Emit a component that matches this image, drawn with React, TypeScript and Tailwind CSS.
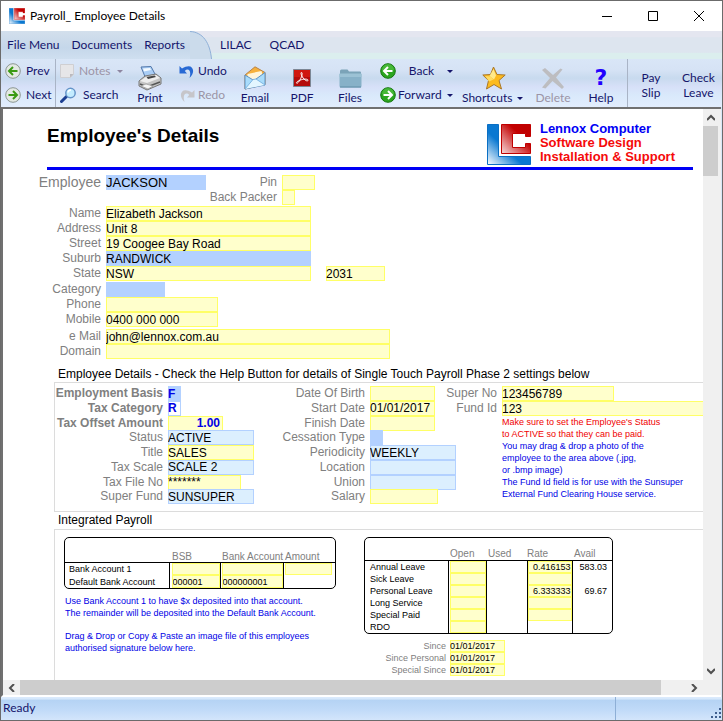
import { useId } from "react";
import type { ReactNode } from "react";

type Tone = "yellow" | "blue" | "sky" | "white";

const tones: Record<Tone, string> = {
  yellow: "bg-[#ffffcc] shadow-[inset_0_0_0_1px_#ffff66]",
  blue: "bg-[#b3d1ff]",
  sky: "bg-[#dceffe] shadow-[inset_0_0_0_1px_#b3d1ff]",
  white: "bg-white shadow-[inset_0_0_0_1px_#b3d1ff]",
};

type FieldProps = {
  label: string;
  value?: string;
  tone?: Tone;
  width: string;
  labelWidth: string;
  labelClass?: string;
  inputClass?: string;
};

function Field({
  label,
  value = "",
  tone = "yellow",
  width,
  labelWidth,
  labelClass = "text-[12px] text-[#808080]",
  inputClass = "text-[12px]",
}: FieldProps) {
  const id = useId();
  return (
    <div className="flex h-[15px] items-center gap-[5px]">
      <label
        htmlFor={id}
        className={`${labelWidth} ${labelClass} shrink-0 whitespace-nowrap text-right leading-[15px]`}
      >
        {label}
      </label>
      <input
        id={id}
        type="text"
        defaultValue={value}
        className={`${width} ${tones[tone]} ${inputClass} h-full shrink-0 leading-none outline-none`}
      />
    </div>
  );
}

function CellInput({ label, value = "", right = false }: { label: string; value?: string; right?: boolean }) {
  return (
    <input
      type="text"
      aria-label={label}
      defaultValue={value}
      className={`block h-full w-full bg-[#ffffcc] text-[9px] leading-none shadow-[inset_0_0_0_1px_#ffff66] outline-none ${
        right ? "pr-px text-right" : "pl-px"
      }`}
    />
  );
}

/* ICONS */

function LogoMark({ className }: { className: string }) {
  const id = useId();
  return (
    <svg viewBox="0 0 44 41" className={className} preserveAspectRatio="none" aria-hidden="true">
      <defs>
        <linearGradient id={`${id}b`} x1="0" y1="1" x2="0.75" y2="0.25">
          <stop offset="0" stopColor="#fff" />
          <stop offset="0.55" stopColor="#0a78d1" />
          <stop offset="1" stopColor="#0a78d1" />
        </linearGradient>
        <linearGradient id={`${id}r`} x1="0" y1="1" x2="0.8" y2="0.2">
          <stop offset="0" stopColor="#f6dcdc" />
          <stop offset="0.8" stopColor="#c40000" />
          <stop offset="1" stopColor="#c00000" />
        </linearGradient>
      </defs>
      <path d="M.5.5H11.500V32.500H43.500V40.500H.5Z" fill={`url(#${id}b)`} stroke="#0a6fc4" />
      <path
        d="M14.500.5H43.500V12.500H38.500V9.500H25.500V23.500H38.500V19.500H43.500V29.500H14.500Z"
        fill={`url(#${id}r)`}
        stroke="#c00000"
      />
    </svg>
  );
}

function ArrowDisc({ dir, tone }: { dir: "left" | "right"; tone: "light" | "solid" }) {
  const solid = tone === "solid";
  return (
    <svg viewBox="0 0 16 16" className="size-4 shrink-0" aria-hidden="true">
      <circle
        cx="8"
        cy="8"
        r="7.300"
        fill={solid ? "#2ba51f" : "#e3e9e3"}
        stroke={solid ? "#15770f" : "#8c9691"}
        strokeWidth="1"
      />
      {solid && <path d="M2 7a6 6 0 0 1 12 0q-6 2-12 0Z" fill="#5cc94b" opacity=".55" />}
      <path
        d={dir === "left" ? "M12.500 8H4M8 4 4 8l4 4" : "M3.500 8H12M8 4l4 4-4 4"}
        fill="none"
        stroke={solid ? "#fff" : "#3a9a12"}
        strokeWidth="2"
      />
    </svg>
  );
}

function Caret({ className }: { className: string }) {
  return (
    <svg viewBox="0 0 6 3" className={`h-[3px] w-[6px] shrink-0 ${className}`} aria-hidden="true">
      <path d="M0 0h6L3 3Z" fill="currentColor" />
    </svg>
  );
}

function NoteIcon() {
  return (
    <svg viewBox="0 0 16 16" className="size-4 shrink-0" aria-hidden="true">
      <path d="M.5 1.500h13v10l-3 3H.5Z" fill="#e6e6e8" stroke="#cfcfd2" />
      <path d="M13.500 11h-3.500v3.500Z" fill="#b9b9be" />
    </svg>
  );
}

function SearchIcon() {
  return (
    <svg viewBox="0 0 18 16" className="h-4 w-[18px] shrink-0" aria-hidden="true">
      <path d="m1.500 14.500 5-5" stroke="#1c3f92" strokeWidth="3" strokeLinecap="round" />
      <circle cx="10.500" cy="6" r="4.700" fill="#c3ecff" stroke="#6594c8" strokeWidth="1.500" />
      <path d="M8 5.500a3 3 0 0 1 3-2.500" stroke="#fff" strokeWidth="1.500" fill="none" />
    </svg>
  );
}

function PrinterIcon() {
  return (
    <svg viewBox="0 0 24 25" className="h-[25px] w-6" aria-hidden="true">
      <path d="m3 1 10-.5 5 9.500-10 3Z" fill="#a9cdf5" stroke="#5479ab" />
      <path d="m5 2.500 7-.5 1 2-7 1.500Z" fill="#f4faff" />
      <path d="M1 15 7 10l11-2 5 4v6L9 24l-8-4Z" fill="#c4c4c4" stroke="#777" />
      <path d="m2 15 6-4 10-2 4 3-13 5Z" fill="#eee" />
      <path d="m8.500 11 8-1.500 1.500 1.500L10 13Z" fill="#444" />
      <path d="m2 18 7 3 13-5" fill="none" stroke="#555" strokeWidth="1.500" />
      <path d="m3 20 5-2 7 2-5 3Z" fill="#f6f6f6" stroke="#888" strokeWidth=".6" />
    </svg>
  );
}

function TurnIcon({ flip = false }: { flip?: boolean }) {
  return (
    <svg
      viewBox="0 0 16 15"
      className={`h-[15px] w-4 shrink-0 ${flip ? "-scale-x-100 text-[#c6c6ca]" : "text-[#2769d4]"}`}
      aria-hidden="true"
    >
      <path d="M.5 1v8h8L6 6.500C8.500 4 12.500 5 10 13.500 17.500 8-.5-3.500 14 5 11.500.5 6.500.5 3 4Z" fill="none" />
      <path d="M.5 2v7.500h7.500L5.800 7C8.500 4 13 5.500 10.500 14 17.500 8 14-2.500 3 4.500Z" fill="currentColor" />
    </svg>
  );
}

function EmailIcon() {
  return (
    <svg viewBox="0 0 22 24" className="h-6 w-[22px]" aria-hidden="true">
      <path d="M1 9 11 .8 21 6.500v12L1 23Z" fill="#f6b13c" stroke="#b8834a" />
      <path d="m3.500 8 14-3 1.500 6-8 4-7.500-3Z" fill="#fff5d9" />
      <path d="m1 9 9 5.500L21 6.500v12.500L1 23Z" fill="#a9dcfb" stroke="#5c91c5" />
      <path d="M1 23 9 13.500l3-.500 9 6" fill="#e3f6ff" stroke="#6da9dc" strokeWidth=".8" />
    </svg>
  );
}

function PdfIcon() {
  return (
    <svg viewBox="0 0 18 18" className="size-[18px]" aria-hidden="true">
      <path d="M.5.500h17v17H.5Z" fill="#b40b0b" stroke="#7c8694" />
      <path d="M1 1h16v7H1Z" fill="#d0170f" />
      <path
        d="M8.500 3.500c-1.500 0 .5 4.500 2.500 6.500s4 2.500 4 1.200-3.500-1.400-6.500-.5-5.500 2.300-5 3.300 2.500-1 4-4S9.800 3.500 8.500 3.500Z"
        fill="none"
        stroke="#fff"
        strokeWidth="1"
      />
    </svg>
  );
}

function FolderIcon() {
  return (
    <svg viewBox="0 0 23 19" className="h-[19px] w-[23px]" aria-hidden="true">
      <path d="M1 2q0-1.500 1.500-1.500h6L10 2.500h11q1 0 1 1v5H1Z" fill="#7ba3b8" />
      <path d="M.5 5h22v12q0 1.500-1.500 1.500H2Q.5 18.500.5 17Z" fill="#87b1c8" />
      <path d="M.5 4.500h22V8H.5Z" fill="#9cc2d5" />
      <path d="M1 18h21" stroke="#5f8ca6" />
    </svg>
  );
}

function StarIcon() {
  return (
    <svg viewBox="0 0 24 24" className="size-6" aria-hidden="true">
      <path
        d="M11.500 1 15 8.500l8.200.5-6.200 5.500 2.500 8.500-7.500-4.500L4.500 23l2-8.500L.8 9 8.500 8.500Z"
        fill="#fdbb1f"
        stroke="#a9782a"
        strokeLinejoin="round"
      />
      <path d="m11.500 3 2.500 6.500-2 4-4.500-3.500Z" fill="#ffe98a" />
      <path d="m3 10 5.500.5 3 3-4.500 2Z" fill="#ffdc62" />
    </svg>
  );
}

function DeleteIcon() {
  return (
    <svg viewBox="0 0 22 21" className="h-[21px] w-[22px]" aria-hidden="true">
      <path d="M0 2 3 0l8 7L18.500.5l2 1L14 9.500 22 19l-2 2-9.500-8L3.500 20.500 0 19.500 8 10Z" fill="#bdbdc0" />
    </svg>
  );
}

function Chevron({ d }: { d: string }) {
  return (
    <svg viewBox="0 0 8 8" className="size-2" aria-hidden="true">
      <path d={d} fill="none" stroke="#505050" strokeWidth="2" />
    </svg>
  );
}

/* TOOLBAR */

function SmallButton({ children, off = false }: { children: ReactNode; off?: boolean }) {
  return (
    <button
      type="button"
      disabled={off}
      className={`flex h-6 items-center whitespace-nowrap ${off ? "text-[#9c94a6]" : ""}`}
    >
      {children}
    </button>
  );
}

function BigButton({
  icon,
  label,
  width,
  off = false,
}: {
  icon: ReactNode;
  label: string;
  width: string;
  off?: boolean;
}) {
  return (
    <button
      type="button"
      disabled={off}
      className={`flex ${width} shrink-0 flex-col items-center ${off ? "text-[#9c94a6]" : ""}`}
    >
      <span className="flex h-[34px] items-center pt-1">{icon}</span>
      <span className="leading-[10px]">{label}</span>
    </button>
  );
}

function Toolbar() {
  return (
    <div className="flex h-12 shrink-0 bg-[linear-gradient(#d9e6f7_0%,#d6e3f5_22%,#c8daee_40%,#d7e0f8_58%,#d9e9fb_75%,#e2edfd_100%)] text-[12px] text-[#15156b]">
      <div className="flex w-[55px] shrink-0 flex-col border-r border-[#a9b4c6] pl-1">
        <SmallButton>
          <ArrowDisc dir="left" tone="light" />
          <span className="ml-[5px]">Prev</span>
        </SmallButton>
        <SmallButton>
          <ArrowDisc dir="right" tone="light" />
          <span className="ml-[5px]">Next</span>
        </SmallButton>
      </div>
      <div className="flex w-[72px] shrink-0 flex-col pl-1">
        <SmallButton off>
          <NoteIcon />
          <span className="ml-[3px] w-[38px] text-left">Notes</span>
          <Caret className="text-[#8d86a0]" />
        </SmallButton>
        <SmallButton>
          <SearchIcon />
          <span className="ml-[5px]">Search</span>
        </SmallButton>
      </div>
      <BigButton width="w-[44px]" icon={<PrinterIcon />} label="Print" />
      <div className="flex w-[62px] shrink-0 flex-col pl-[7px]">
        <SmallButton>
          <TurnIcon />
          <span className="ml-[3px]">Undo</span>
        </SmallButton>
        <SmallButton off>
          <TurnIcon flip />
          <span className="ml-[3px]">Redo</span>
        </SmallButton>
      </div>
      <BigButton width="w-[42px]" icon={<EmailIcon />} label="Email" />
      <BigButton width="w-[52px]" icon={<PdfIcon />} label="PDF" />
      <BigButton width="w-[44px]" icon={<FolderIcon />} label="Files" />
      <div className="flex w-[88px] shrink-0 flex-col pl-2">
        <SmallButton>
          <ArrowDisc dir="left" tone="solid" />
          <span className="w-[51px] text-center">Back</span>
          <Caret className="text-[#15156b]" />
        </SmallButton>
        <SmallButton>
          <ArrowDisc dir="right" tone="solid" />
          <span className="w-[51px] pl-[2px] text-left">Forward</span>
          <Caret className="text-[#15156b]" />
        </SmallButton>
      </div>
      <button type="button" className="flex w-[68px] shrink-0 flex-col">
        <span className="flex h-[34px] w-full items-center justify-center pt-1">
          <StarIcon />
        </span>
        <span className="flex w-full items-center justify-between pl-[2px] pr-[5px] leading-[10px]">
          Shortcuts
          <Caret className="text-[#15156b]" />
        </span>
      </button>
      <BigButton width="w-[50px]" icon={<DeleteIcon />} label="Delete" off />
      <BigButton
        width="w-[46px]"
        icon={<span className="font-['DejaVu_Sans',sans-serif] text-[22px] font-bold leading-none text-[#2200ff]">?</span>}
        label="Help"
      />
      <div className="ml-[3px] flex flex-1 border-l border-[#a9b4c6]">
        <button type="button" className="w-[46px] pt-1 leading-[15px]">
          Pay
          <br />
          Slip
        </button>
        <button type="button" className="w-[49px] pt-1 leading-[15px]">
          Check
          <br />
          Leave
        </button>
      </div>
    </div>
  );
}

/* PANELS */

const leaveRows = [
  { name: "Annual Leave", rate: "0.416153", avail: "583.03", rated: true },
  { name: "Sick Leave", rate: "", avail: "", rated: true },
  { name: "Personal Leave", rate: "6.333333", avail: "69.67", rated: true },
  { name: "Long Service", rate: "", avail: "", rated: true },
  { name: "Special Paid", rate: "", avail: "", rated: true },
  { name: "RDO", rate: "", avail: "", rated: false },
];

function BankTable() {
  return (
    <div className="overflow-hidden rounded-[5px] border border-black">
      <table className="w-full table-fixed border-collapse text-[9px] leading-[12px]">
        <colgroup>
          <col className="w-[104px]" />
          <col className="w-[51px]" />
          <col className="w-[63px]" />
          <col />
        </colgroup>
        <thead>
          <tr className="h-[24px] border-b border-black text-left align-bottom text-[10px] leading-[10px] text-[#808080]">
            <th />
            <th className="pl-[3px] font-normal">BSB</th>
            <th className="whitespace-nowrap pl-[2px] font-normal">Bank Account</th>
            <th className="pl-[2px] font-normal">Amount</th>
          </tr>
        </thead>
        <tbody>
          <tr className="h-[13px]">
            <td className="pl-1">Bank Account 1</td>
            <td className="h-[13px] border-l border-black pl-[2px]">
              <CellInput label="Bank Account 1 BSB" />
            </td>
            <td className="h-[13px] border-l border-black pl-px">
              <CellInput label="Bank Account 1 number" />
            </td>
            <td className="h-[13px] border-l border-black pl-px pr-[3px]">
              <CellInput label="Bank Account 1 amount" />
            </td>
          </tr>
          <tr className="h-[13px]">
            <td className="whitespace-nowrap pl-1">Default Bank Account</td>
            <td className="h-[13px] border-l border-black pl-[2px]">
              <CellInput label="Default Bank Account BSB" value="000001" />
            </td>
            <td className="h-[13px] border-l border-black pl-px">
              <CellInput label="Default Bank Account number" value="000000001" />
            </td>
            <td className="border-l border-black" />
          </tr>
        </tbody>
      </table>
    </div>
  );
}

function LeaveTable() {
  return (
    <div className="w-[249px] overflow-hidden rounded-[5px] border border-black">
      <table className="w-full table-fixed border-collapse text-[9px] leading-[12px]">
        <colgroup>
          <col className="w-[83px]" />
          <col className="w-[38px]" />
          <col className="w-[41px]" />
          <col className="w-[45px]" />
          <col />
        </colgroup>
        <thead>
          <tr className="h-[22px] border-b border-black text-left align-bottom text-[10px] leading-[12px] text-[#808080]">
            <th />
            <th className="pl-[2px] font-normal">Open</th>
            <th className="pl-[2px] font-normal">Used</th>
            <th className="font-normal">Rate</th>
            <th className="pl-[2px] font-normal">Avail</th>
          </tr>
        </thead>
        <tbody>
          {leaveRows.map((row) => (
            <tr key={row.name} className="h-3">
              <td className="whitespace-nowrap pl-[5px]">{row.name}</td>
              <td className="h-3 border-l border-black pl-px">
                <CellInput label={`${row.name} open`} />
              </td>
              <td className="border-l border-black" />
              <td className="h-3 border-l border-black">
                {row.rated && <CellInput label={`${row.name} rate`} value={row.rate} right />}
              </td>
              <td className="border-l border-black pr-[5px] text-right">{row.avail}</td>
            </tr>
          ))}
        </tbody>
      </table>
    </div>
  );
}

function SinceField({ label }: { label: string }) {
  const id = useId();
  return (
    <div className="flex h-3 items-center gap-1 text-[9px] leading-[12px]">
      <label htmlFor={id} className="w-[82px] text-right text-[#808080]">
        {label}
      </label>
      <div className="h-full w-[55px]">
        <input
          id={id}
          type="text"
          defaultValue="01/01/2017"
          className="block h-full w-full bg-[#ffffcc] leading-none shadow-[inset_0_0_0_1px_#ffff66] outline-none"
        />
      </div>
    </div>
  );
}

function DetailsPanel() {
  const bold = "text-[12px] font-bold text-[#808080]";
  const boldBlue = "text-[12px] font-bold text-[#0000e6]";
  return (
    <div className="ml-[51px] flex h-[130px] border border-r-0 border-[#dcdcdc] pt-[3px]">
      <div className="grid h-[118px] grid-rows-8">
        <Field labelWidth="w-[108px]" label="Employment Basis" value="F" tone="blue" width="w-[13px]" labelClass={bold} inputClass={boldBlue} />
        <Field labelWidth="w-[108px]" label="Tax Category" value="R" tone="white" width="w-[13px]" labelClass={bold} inputClass={boldBlue} />
        <Field
          labelWidth="w-[108px]"
          label="Tax Offset Amount"
          value="1.00"
          width="w-[55px]"
          labelClass={bold}
          inputClass="text-[12px] font-bold text-[#0000e6] text-right pr-[3px]"
        />
        <Field labelWidth="w-[108px]" label="Status" value="ACTIVE" tone="sky" width="w-[86px]" />
        <Field labelWidth="w-[108px]" label="Title" value="SALES" width="w-[86px]" />
        <Field labelWidth="w-[108px]" label="Tax Scale" value="SCALE 2" tone="sky" width="w-[86px]" />
        <Field labelWidth="w-[108px]" label="Tax File No" value="*******" width="w-[73px]" />
        <Field labelWidth="w-[108px]" label="Super Fund" value="SUNSUPER" tone="sky" width="w-[86px]" />
      </div>
      <div className="-ml-[2px] grid h-[118px] grid-rows-8">
        <Field labelWidth="w-[113px]" label="Date Of Birth" width="w-[65px]" />
        <Field labelWidth="w-[113px]" label="Start Date" value="01/01/2017" width="w-[65px]" />
        <Field labelWidth="w-[113px]" label="Finish Date" width="w-[65px]" />
        <Field labelWidth="w-[113px]" label="Cessation Type" tone="blue" width="w-[13px]" />
        <Field labelWidth="w-[113px]" label="Periodicity" value="WEEKLY" tone="sky" width="w-[86px]" />
        <Field labelWidth="w-[113px]" label="Location" tone="sky" width="w-[86px]" />
        <Field labelWidth="w-[113px]" label="Union" tone="sky" width="w-[86px]" />
        <Field labelWidth="w-[113px]" label="Salary" width="w-[68px]" />
      </div>
      <div className="-ml-[14px] min-w-0 flex-1">
        <Field labelWidth="w-[55px]" label="Super No" value="123456789" width="w-[112px]" />
        <Field labelWidth="w-[55px]" label="Fund Id" value="123" width="w-[202px]" />
        <div className="whitespace-nowrap pl-[60px] text-[9px] leading-[12px] text-[#0000e6]">
          <p className="text-[#f00000]">
            Make sure to set the Employee's Status
            <br />
            to ACTIVE so that they can be paid.
          </p>
          <p>
            You may drag &amp; drop a photo of the
            <br />
            employee to the area above (.jpg,
            <br />
            or .bmp image)
          </p>
          <p>
            The Fund Id field is for use with the Sunsuper
            <br />
            External Fund Clearing House service.
          </p>
        </div>
      </div>
    </div>
  );
}

function EmployeeForm() {
  return (
    <div className="min-w-0 flex-1 overflow-hidden bg-white font-['Liberation_Sans',Arial,sans-serif] text-black">
      <div className="ml-11 mr-[10px] flex h-[61px] justify-between border-b-[3px] border-[#0000f5]">
        <h1 className="pt-[15px] text-[19px] font-bold leading-[23px]">Employee's Details</h1>
        <div className="flex gap-[9px] pr-[18px] pt-[13px]">
          <LogoMark className="mt-[2px] h-[41px] w-11" />
          <p className="whitespace-nowrap text-[13px] font-bold leading-[14px] text-[#f50a0a]">
            <span className="text-[#0000f5]">Lennox Computer</span>
            <br />
            Software Design
            <br />
            Installation &amp; Support
          </p>
        </div>
      </div>

      <div className="mt-[5px] flex h-[31px]">
        <Field
          labelWidth="w-[98px]"
          label="Employee"
          value="JACKSON"
          tone="blue"
          width="w-[100px]"
          labelClass="text-[14px] text-[#808080]"
          inputClass="text-[13px]"
        />
        <div>
          <Field labelWidth="w-[71px]" label="Pin" width="w-[33px]" />
          <Field labelWidth="w-[71px]" label="Back Packer" width="w-[13px]" />
        </div>
      </div>

      <Field labelWidth="w-[98px]" label="Name" value="Elizabeth Jackson" width="w-[205px]" />
      <Field labelWidth="w-[98px]" label="Address" value="Unit 8" width="w-[205px]" />
      <Field labelWidth="w-[98px]" label="Street" value="19 Coogee Bay Road" width="w-[205px]" />
      <Field labelWidth="w-[98px]" label="Suburb" value="RANDWICK" tone="blue" width="w-[205px]" />
      <div className="flex gap-[15px]">
        <Field labelWidth="w-[98px]" label="State" value="NSW" width="w-[205px]" />
        <input
          type="text"
          aria-label="Postcode"
          defaultValue="2031"
          className="h-[15px] w-[59px] bg-[#ffffcc] text-[12px] leading-none shadow-[inset_0_0_0_1px_#ffff66] outline-none"
        />
      </div>
      <div className="mt-px">
        <Field labelWidth="w-[98px]" label="Category" tone="blue" width="w-[59px]" />
        <Field labelWidth="w-[98px]" label="Phone" width="w-[112px]" />
        <Field labelWidth="w-[98px]" label="Mobile" value="0400 000 000" width="w-[112px]" />
      </div>
      <div className="mt-[2px]">
        <Field labelWidth="w-[98px]" label="e Mail" value="john@lennox.com.au" width="w-[284px]" />
        <Field labelWidth="w-[98px]" label="Domain" width="w-[284px]" />
      </div>

      <h2 className="ml-[55px] mt-[7px] whitespace-nowrap text-[12px] leading-[16px]">
        Employee Details - Check the Help Button for details of Single Touch Payroll Phase 2 settings below
      </h2>
      <DetailsPanel />
      <h2 className="ml-[55px] text-[12px] leading-[17px]">Integrated Payroll</h2>
      <div className="ml-[51px] flex h-[200px] gap-[28px] border-l border-t border-[#dcdcdc] pl-[9px] pt-[7px]">
        <div className="w-[272px] shrink-0">
          <BankTable />
          <div className="mt-[6px] whitespace-nowrap pl-px text-[9px] leading-[12px] text-[#0000e6]">
            <p>
              Use Bank Account 1 to have $x deposited into that account.
              <br />
              The remainder will be deposited into the Default Bank Account.
            </p>
            <p className="mt-[11px]">
              Drag &amp; Drop or Copy &amp; Paste an image file of this employees
              <br />
              authorised signature below here.
            </p>
          </div>
        </div>
        <div>
          <LeaveTable />
          <div className="mt-[6px]">
            <SinceField label="Since" />
            <SinceField label="Since Personal" />
            <SinceField label="Special Since" />
          </div>
        </div>
      </div>
    </div>
  );
}

export default function App() {
  return (
    <div className="flex h-screen flex-col overflow-hidden border border-[#6b6b6b] bg-[#d7e6f8] font-['Lato','Segoe_UI',sans-serif]">
      {/* TITLE BAR */}
      <header className="flex h-[30px] shrink-0 items-center bg-white pl-2">
        <LogoMark className="h-4 w-4" />
        <span className="ml-[5px] flex-1 text-[12px] text-black">Payroll_ Employee Details</span>
        <button type="button" aria-label="Minimise" className="flex w-[46px] justify-center">
          <svg viewBox="0 0 10 10" className="size-[10px]">
            <path d="M0 5.500h10" stroke="#000" />
          </svg>
        </button>
        <button type="button" aria-label="Maximise" className="flex w-[46px] justify-center">
          <svg viewBox="0 0 10 10" className="size-[10px]">
            <path d="M.5.500h9v9h-9Z" fill="none" stroke="#000" />
          </svg>
        </button>
        <button type="button" aria-label="Close" className="flex w-[46px] justify-center">
          <svg viewBox="0 0 10 10" className="size-[10px]">
            <path d="m0 0 10 10M10 0 0 10" stroke="#000" />
          </svg>
        </button>
      </header>

      {/* MENU BAR */}
      <nav className="flex h-7 shrink-0 whitespace-nowrap bg-[linear-gradient(#e4e6f0_0%,#e4e6f0_20%,#dde5ef_24%,#dde5ef_76%,#dbeeee_80%,#dbeeee_100%)] text-[12px] text-[#15156b]">
        <div className="flex w-[189px] shrink-0 gap-[12px] bg-[linear-gradient(#d3dfec,#c5d7ea_60%,#cfdff0)] pl-[6px]">
          <button type="button">File Menu</button>
          <button type="button">Documents</button>
          <button type="button">Reports</button>
        </div>
        <svg viewBox="0 0 24 28" className="h-7 w-6 shrink-0" aria-hidden="true">
          <path d="M0 0C13 1 20 12 21.500 28H0Z" fill="#cbdbeb" />
          <path d="M0 .5C13 1 20 12 21.500 28" fill="none" stroke="#8fb0d8" />
        </svg>
        <div className="flex gap-[18px] pl-[6px]">
          <button type="button">LILAC</button>
          <button type="button">QCAD</button>
        </div>
      </nav>

      <Toolbar />

      {/* FORM AND SCROLL BARS */}
      <main className="mr-px flex min-h-0 flex-1 border-l-2 border-t-2 border-[#707070] bg-[#f0f0f0]">
        <EmployeeForm />
        <div className="mr-[3px] flex w-[15px] shrink-0 flex-col items-center justify-between py-[5px]">
          <div className="flex w-full flex-col items-center gap-1">
            <Chevron d="M0 6l4-4 4 4" />
            <div className="h-[50px] w-full bg-[#cdcdcd]" />
          </div>
          <Chevron d="M0 2l4 4 4-4" />
        </div>
      </main>
      <div className="mr-px flex h-[17px] shrink-0 items-center border-b-2 border-l-2 border-b-white border-l-[#707070] bg-[#f0f0f0]">
        <div className="flex w-[17px] justify-center">
          <Chevron d="M6 0 2 4l4 4" />
        </div>
        <div className="h-full flex-1 bg-[#cdcdcd]" />
        <div className="flex w-[60px] pl-[29px]">
          <Chevron d="M2 0l4 4-4 4" />
        </div>
      </div>

      {/* STATUS BAR */}
      <footer className="flex h-[23px] shrink-0 bg-[linear-gradient(#dcebfd_0%,#d4e7fb_9%,#b5d3f4_14%,#c0daf8_55%,#d3e5fb_100%)] text-[12px] text-[#15156b]">
        <span className="flex-1 pl-[2px] leading-[21px]">Ready</span>
        <div className="flex w-[107px] items-end justify-end border-l border-[#8eafd6] pb-[2px] pr-px">
          <svg viewBox="0 0 10 10" className="size-[10px]" aria-hidden="true">
            <path d="M8 0h2v2H8ZM4 4h2v2H4ZM8 4h2v2H8ZM0 8h2v2H0ZM4 8h2v2H4ZM8 8h2v2H8Z" fill="#3f5f8f" />
          </svg>
        </div>
      </footer>
    </div>
  );
}
